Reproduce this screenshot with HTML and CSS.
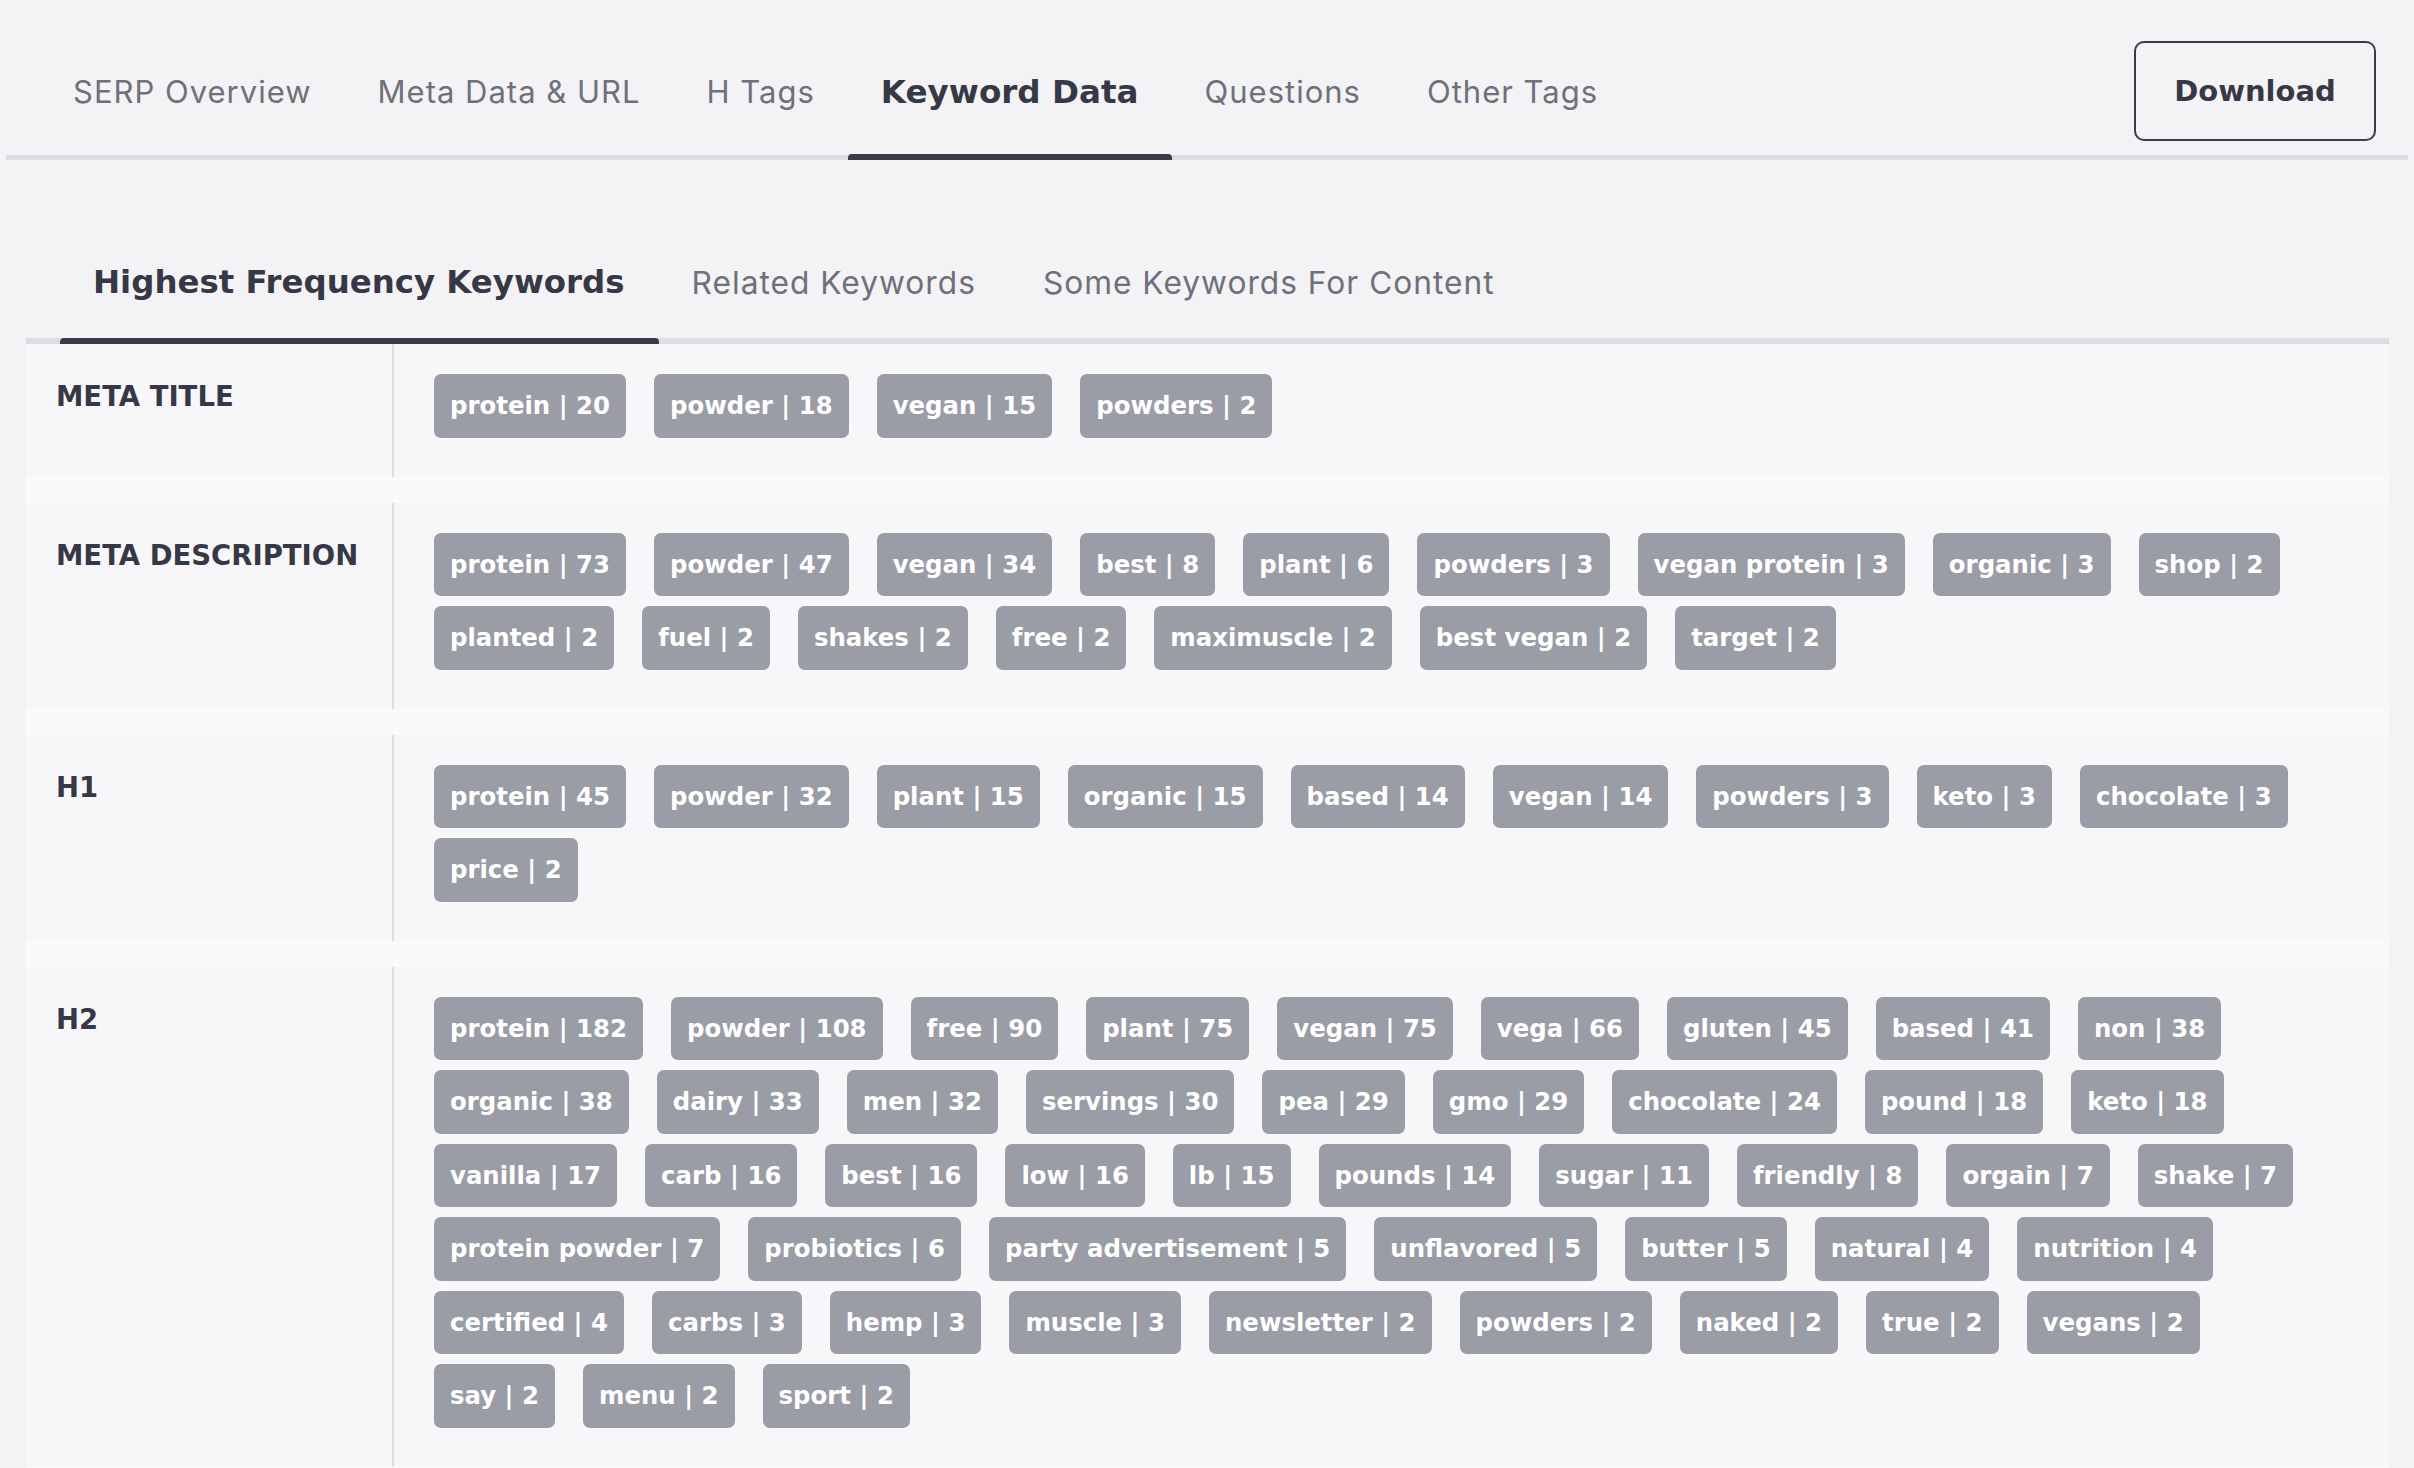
FILE: index.html
```html
<!DOCTYPE html>
<html lang="en">
<head>
<meta charset="utf-8">
<title>Keyword Data</title>
<link rel="stylesheet" href="styles.css">
</head>
<body>
<div class="page">
  <nav class="topnav">
    <div class="tabs">
      <a class="tab">SERP Overview</a>
      <a class="tab">Meta Data &amp; URL</a>
      <a class="tab">H Tags</a>
      <a class="tab active">Keyword Data</a>
      <a class="tab">Questions</a>
      <a class="tab">Other Tags</a>
    </div>
    <button class="download">Download</button>
  </nav>

  <nav class="subnav">
    <a class="subtab active">Highest Frequency Keywords</a>
    <a class="subtab">Related Keywords</a>
    <a class="subtab">Some Keywords For Content</a>
  </nav>

  <section class="table">
    <div class="row">
      <div class="label">META TITLE</div>
      <div class="values">
        <span class="tag">protein | 20</span><span class="tag">powder | 18</span><span class="tag">vegan | 15</span><span class="tag">powders | 2</span>
      </div>
    </div>
    <div class="row">
      <div class="label">META DESCRIPTION</div>
      <div class="values">
        <span class="tag">protein | 73</span><span class="tag">powder | 47</span><span class="tag">vegan | 34</span><span class="tag">best | 8</span><span class="tag">plant | 6</span><span class="tag">powders | 3</span><span class="tag">vegan protein | 3</span><span class="tag">organic | 3</span><span class="tag">shop | 2</span><span class="tag">planted | 2</span><span class="tag">fuel | 2</span><span class="tag">shakes | 2</span><span class="tag">free | 2</span><span class="tag">maximuscle | 2</span><span class="tag">best vegan | 2</span><span class="tag">target | 2</span>
      </div>
    </div>
    <div class="row">
      <div class="label">H1</div>
      <div class="values">
        <span class="tag">protein | 45</span><span class="tag">powder | 32</span><span class="tag">plant | 15</span><span class="tag">organic | 15</span><span class="tag">based | 14</span><span class="tag">vegan | 14</span><span class="tag">powders | 3</span><span class="tag">keto | 3</span><span class="tag">chocolate | 3</span><span class="tag">price | 2</span>
      </div>
    </div>
    <div class="row">
      <div class="label">H2</div>
      <div class="values">
        <span class="tag">protein | 182</span><span class="tag">powder | 108</span><span class="tag">free | 90</span><span class="tag">plant | 75</span><span class="tag">vegan | 75</span><span class="tag">vega | 66</span><span class="tag">gluten | 45</span><span class="tag">based | 41</span><span class="tag">non | 38</span><span class="tag">organic | 38</span><span class="tag">dairy | 33</span><span class="tag">men | 32</span><span class="tag">servings | 30</span><span class="tag">pea | 29</span><span class="tag">gmo | 29</span><span class="tag">chocolate | 24</span><span class="tag">pound | 18</span><span class="tag">keto | 18</span><span class="tag">vanilla | 17</span><span class="tag">carb | 16</span><span class="tag">best | 16</span><span class="tag">low | 16</span><span class="tag">lb | 15</span><span class="tag">pounds | 14</span><span class="tag">sugar | 11</span><span class="tag">friendly | 8</span><span class="tag">orgain | 7</span><span class="tag">shake | 7</span><span class="tag">protein powder | 7</span><span class="tag">probiotics | 6</span><span class="tag">party advertisement | 5</span><span class="tag">unflavored | 5</span><span class="tag">butter | 5</span><span class="tag">natural | 4</span><span class="tag">nutrition | 4</span><span class="tag">certified | 4</span><span class="tag">carbs | 3</span><span class="tag">hemp | 3</span><span class="tag">muscle | 3</span><span class="tag">newsletter | 2</span><span class="tag">powders | 2</span><span class="tag">naked | 2</span><span class="tag">true | 2</span><span class="tag">vegans | 2</span><span class="tag">say | 2</span><span class="tag">menu | 2</span><span class="tag">sport | 2</span>
      </div>
    </div>
  </section>
</div>
</body>
</html>
```

FILE: styles.css
```css
* { box-sizing: border-box; }

html, body {
  margin: 0;
  padding: 0;
  background: #f3f3f6;
  height: 100%;
  overflow: hidden;
}

body {
  font-family: Inter, "Open Sans", sans-serif;
  color: #363845;
}

.page {
  padding: 0 6px;
}

/* ---------- top navigation ---------- */
.topnav {
  display: flex;
  align-items: center;
  justify-content: space-between;
  height: 160px;
  padding: 28px 32px 0 34px;
  border-bottom: 5px solid #dcdde2;
}

.tabs {
  display: flex;
  align-self: stretch;
}

.tab {
  position: relative;
  display: flex;
  align-items: center;
  padding: 0 33px;
  font-size: 31px;
  letter-spacing: 1px;
  color: #6f707a;
  white-space: nowrap;
}

.tab.active {
  font-family: "DejaVu Sans", sans-serif;
  font-weight: 700;
  font-size: 32.6px;
  letter-spacing: 0;
  color: #363845;
}

.tab.active::after {
  content: "";
  position: absolute;
  left: 0;
  right: 0;
  bottom: -5px;
  height: 6px;
  border-radius: 4px 4px 0 0;
  background: #393b48;
}

.download {
  width: 242px;
  height: 100px;
  border: 2.5px solid #3a3c48;
  border-radius: 10px;
  background: transparent;
  font-family: "DejaVu Sans", sans-serif;
  font-weight: 700;
  font-size: 29px;
  color: #363845;
  margin-bottom: 2px;
}

/* ---------- sub navigation ---------- */
.subnav {
  display: flex;
  margin: 78px 19px 0 20px;
  padding-left: 34px;
  border-bottom: 6px solid #dcdde2;
}

.subtab {
  position: relative;
  display: flex;
  align-items: center;
  height: 100px;
  padding: 0 34px 12px 33px;
  font-size: 31.7px;
  letter-spacing: 1px;
  color: #6f707a;
  white-space: nowrap;
}

.subtab.active {
  font-family: "DejaVu Sans", sans-serif;
  font-weight: 700;
  font-size: 32.4px;
  letter-spacing: 0;
  color: #363845;
}

.subtab.active::after {
  content: "";
  position: absolute;
  left: 0;
  right: 0;
  bottom: -6px;
  height: 6px;
  border-radius: 4px 4px 0 0;
  background: #393b48;
}

/* ---------- keyword table ---------- */
.table {
  display: flex;
  flex-direction: column;
  gap: 26px;
  margin: 0 19px 0 20px;
  background: #fafafc;
  min-height: 1200px;
}

.row {
  display: grid;
  grid-template-columns: 366px 1fr;
  background: #f7f7fa;
}

.label {
  padding: 36px 0 0 30px;
  font-family: "DejaVu Sans", sans-serif;
  font-weight: 700;
  font-size: 27.5px;
  line-height: 33px;
  color: #363845;
}

.values {
  display: flex;
  flex-wrap: wrap;
  align-content: flex-start;
  gap: 10px 28px;
  padding: 30px 64px 39px 40px;
  border-left: 2px solid #dcdde0;
}

.tag {
  height: 63.5px;
  padding: 0 16px;
  border-radius: 7px;
  background: #9a9ca6;
  color: #ffffff;
  font-family: "DejaVu Sans", sans-serif;
  font-weight: 700;
  font-size: 24.4px;
  line-height: 63.5px;
  white-space: nowrap;
}
```
